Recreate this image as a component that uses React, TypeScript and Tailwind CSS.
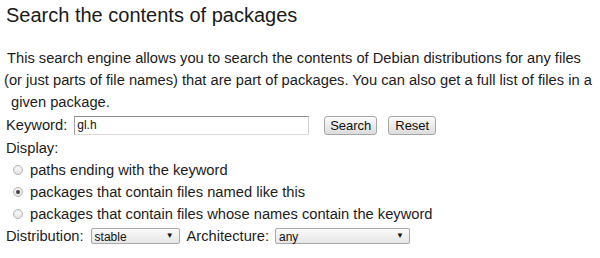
import React from "react";

const font = { fontFamily: '"Liberation Sans", Arial, sans-serif' };

function Radio({ checked }: { checked?: boolean }) {
  return (
    <span className="inline-flex h-[10px] w-[10px] items-center justify-center rounded-full border border-[#b4b4b4] bg-gradient-to-b from-[#fdfdfd] to-[#e2e2e2] shadow-[inset_0_1px_1px_rgba(0,0,0,0.08)]">
      {checked && <span className="h-[4px] w-[4px] rounded-full bg-[#444]" />}
    </span>
  );
}

function Select({ value, width }: { value: string; width: string }) {
  return (
    <span
      className={`inline-flex h-[16px] items-center justify-between rounded-[2px] border border-[#a9a9a9] bg-gradient-to-b from-[#fafafa] to-[#e6e6e6] pl-[3px] pr-[5px] text-[12px] leading-none text-[#111] ${width}`}
    >
      <span className="translate-y-[1px]">{value}</span>
      <span className="text-[8px] text-[#111]">▼</span>
    </span>
  );
}

function Button({ children, className }: { children: React.ReactNode; className: string }) {
  return (
    <span
      className={`inline-flex h-[19px] items-center justify-center rounded-[3px] border border-[#a6a6a6] bg-gradient-to-b from-[#fbfbfb] to-[#dcdcdc] text-[13px] leading-none text-[#111] ${className}`}
    >
      {children}
    </span>
  );
}

export default function App() {
  return (
    <div className="h-[258px] w-[600px] overflow-hidden bg-white text-[#1c1c1c]" style={font}>
      <h1 className="pl-[6px] pt-[3px] text-[20px] leading-[24px] text-[#1a1a1a]">
        Search the contents of packages
      </h1>
      <div className="mt-[20px] text-[14.7px] leading-[22px]">
        <p className="whitespace-nowrap">
          <span className="block pl-[7px]">
            This search engine allows you to search the contents of Debian distributions for any files
          </span>
          <span className="block pl-[4px]">
            (or just parts of file names) that are part of packages. You can also get a full list of files in a
          </span>
          <span className="block pl-[11px]">given package.</span>
        </p>
        <div className="flex h-[24px] items-center pl-[6px]">
          <span>Keyword:</span>
          <span className="ml-[7px] flex h-[19px] w-[235px] items-center border border-t-[#8e8e8e] border-l-[#a0a0a0] border-r-[#d0d0d0] border-b-[#dadada] bg-white pl-[2px] text-[12px] leading-none text-[#111]">
            gl.h
          </span>
          <Button className="ml-[15px] w-[53px]">Search</Button>
          <Button className="ml-[11px] w-[48px]">Reset</Button>
        </div>
        <div className="pl-[6px]">Display:</div>
        <div className="flex items-center pl-[13px]">
          <Radio />
          <span className="ml-[7px]">paths ending with the keyword</span>
        </div>
        <div className="flex items-center pl-[13px]">
          <Radio checked />
          <span className="ml-[7px]">packages that contain files named like this</span>
        </div>
        <div className="flex items-center pl-[13px]">
          <Radio />
          <span className="ml-[7px]">packages that contain files whose names contain the keyword</span>
        </div>
        <div className="flex items-center pl-[6px]">
          <span>Distribution:</span>
          <span className="ml-[7px] flex items-center">
            <Select value="stable" width="w-[89px]" />
          </span>
          <span className="ml-[7px]">Architecture:</span>
          <span className="ml-[6px] flex items-center">
            <Select value="any" width="w-[135px]" />
          </span>
        </div>
      </div>
    </div>
  );
}
